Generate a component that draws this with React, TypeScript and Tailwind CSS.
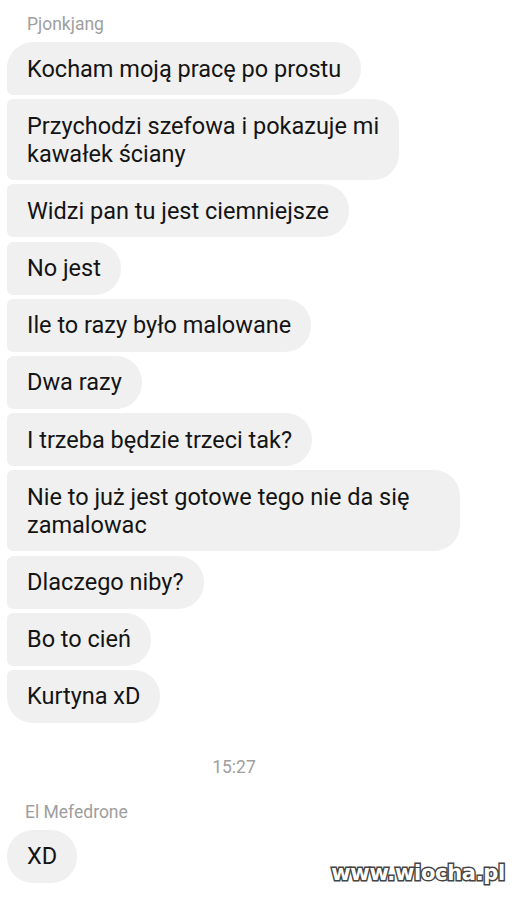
import React from 'react';

type Msg = { lines: string[]; wide?: boolean };

const first: Msg[] = [
  { lines: ['Kocham moją pracę po prostu'] },
  { lines: ['Przychodzi szefowa i pokazuje mi', 'kawałek ściany'] },
  { lines: ['Widzi pan tu jest ciemniejsze'] },
  { lines: ['No jest'] },
  { lines: ['Ile to razy było malowane'] },
  { lines: ['Dwa razy'] },
  { lines: ['I trzeba będzie trzeci tak?'] },
  { lines: ['Nie to już jest gotowe tego nie da się', 'zamalowac'], wide: true },
  { lines: ['Dlaczego niby?'] },
  { lines: ['Bo to cień'] },
  { lines: ['Kurtyna xD'] },
];

const Bubble: React.FC<{ msg: Msg; isFirst: boolean; isLast: boolean }> = ({ msg, isFirst, isLast }) => {
  // grouped messages: the left corners between neighbours are tight
  const tl = isFirst ? 'rounded-tl-[26px]' : 'rounded-tl-[6px]';
  const bl = isLast ? 'rounded-bl-[26px]' : 'rounded-bl-[6px]';
  return (
    <div
      className={`${msg.wide ? 'w-[453px]' : ''} whitespace-nowrap bg-[#f0f0f0] text-[#141414] text-[23.5px] leading-[28px] px-[20px] py-[12.5px] rounded-tr-[26px] rounded-br-[26px] ${tl} ${bl}`}
    >
      {msg.lines.map((l, i) => (
        <div key={i}>{l}</div>
      ))}
    </div>
  );
};

const App: React.FC = () => {
  return (
    <div className="relative w-[521px] h-[900px] overflow-hidden bg-white font-['Roboto',sans-serif]">
      <div className="pl-[7px] pt-[13px]">
        {/* first sender */}
        <div className="pl-[20px] text-[17.5px] leading-[22px] text-[#9e9e9e] mb-[7px]">Pjonkjang</div>
        <div className="flex flex-col items-start gap-[4.2px]">
          {first.map((m, i) => (
            <Bubble key={i} msg={m} isFirst={i === 0} isLast={i === first.length - 1} />
          ))}
        </div>

        {/* timestamp */}
        <div className="mt-[33px] text-center pr-[60px] text-[17.5px] leading-[22px] text-[#9e9e9e]">15:27</div>

        {/* second sender */}
        <div className="mt-[23px] pl-[18px] text-[17.5px] leading-[22px] text-[#9e9e9e] mb-[7px]">El Mefedrone</div>
        <div className="flex flex-col items-start">
          <Bubble msg={{ lines: ['XD'] }} isFirst={true} isLast={true} />
        </div>
      </div>

      {/* watermark */}
      <div className="absolute right-[16px] bottom-[15px] font-['DejaVu_Sans',sans-serif] font-bold text-[21px] leading-[24px] tracking-[-0.3px] text-white [-webkit-text-stroke:3px_#444] [paint-order:stroke_fill]">
        www.wiocha.pl
      </div>
    </div>
  );
};

export default App;
